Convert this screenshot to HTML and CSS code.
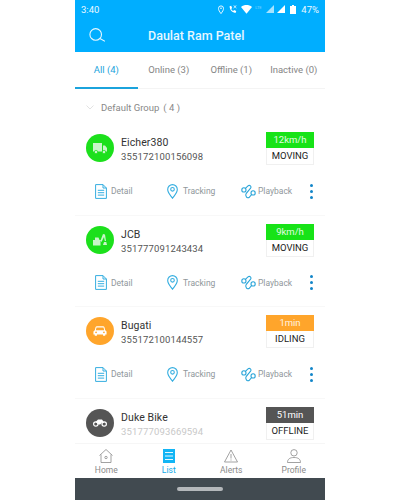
FILE: index.html
```html
<!DOCTYPE html>
<html lang="en">
<head>
<meta charset="utf-8">
<title>Vehicle list</title>
<link rel="stylesheet" href="styles.css">
</head>
<body>
<svg class="defs" width="0" height="0" aria-hidden="true">
  <defs>
    <symbol id="i-detail" viewBox="0 0 12 15">
      <path d="M.6.6h7.400l3.400 3.400V14.400H.6zM8 .6V4h3.400M2.800 6.300h6.400M2.800 8.700h6.400M2.800 11.100h6.400" fill="none" stroke="#35aee0" stroke-width="1"/>
    </symbol>
    <symbol id="i-track" viewBox="0 0 11 15">
      <path d="M5.500 14.300C3 10.800.7 8.500.7 5.400a4.800 4.800 0 0 1 9.600 0c0 3.100-2.300 5.400-4.800 8.900z" fill="none" stroke="#35aee0" stroke-width="1.100"/>
      <circle cx="5.500" cy="5.300" r="1.800" fill="none" stroke="#35aee0" stroke-width="1.100"/>
    </symbol>
    <symbol id="i-play" viewBox="0 0 15 15">
      <circle cx="2.900" cy="5.900" r="2.100" fill="none" stroke="#2aa5d9" stroke-width="1.100"/>
      <circle cx="12.100" cy="8.900" r="2.100" fill="none" stroke="#2aa5d9" stroke-width="1.100"/>
      <path d="M4.400 4.400 7 1.900C8.600.5 11 2.400 9.600 4.200L5.300 9.300C3.600 11.800 6.200 15 8.400 13.200L10.700 10.500" fill="none" stroke="#2aa5d9" stroke-width="1.100"/>
    </symbol>
  </defs>
</svg>
<div class="phone">
  <div class="status">
    <span>3:40</span>
    <div class="status-right">
      <svg class="st-pin" width="6" height="9" viewBox="0 0 6 9"><path d="M3 8.600C1.500 6.500.5 5.200.5 3.400a2.500 2.500 0 0 1 5 0C5.500 5.200 4.500 6.500 3 8.600z" fill="none" stroke="#fff" stroke-width=".9"/><circle cx="3" cy="3.300" r=".8" fill="#fff"/></svg>
      <svg class="st-call" width="8" height="9" viewBox="0 0 8 9"><path d="M.6 1.200 2.200.8l.9 2.200-.9.9c.4.900 1.100 1.700 2 2.100l.9-.9 2.100.9-.4 1.800C3.400 7.800.6 4.800.6 1.200z" fill="#fff"/><path d="M4.600.4 7.400 3M7.400.4 4.600 3" stroke="#fff" stroke-width=".8"/></svg>
      <svg class="st-wifi" width="11" height="9" viewBox="0 0 11 9"><path d="M0 2C3.200-.6 7.800-.6 11 2L5.500 8.800z" fill="#fff"/></svg>
      <span class="lte">LTE</span>
      <svg class="st-sig1" width="8" height="8" viewBox="0 0 8 8"><path d="M8 0V8H0z" fill="#fff" opacity=".65"/></svg>
      <svg class="st-sig2" width="8" height="8" viewBox="0 0 8 8"><path d="M8 0V8H0z" fill="#fff"/></svg>
      <svg class="st-batt" width="6" height="9" viewBox="0 0 6 9"><path d="M2 0h2v1h2v8H0V1h2z" fill="#fff"/></svg>
      <span class="st-pct">47%</span>
    </div>
  </div>
  <header class="header">
    <svg class="search" width="16" height="14" viewBox="0 0 16 14"><circle cx="6.700" cy="6.400" r="5.800" fill="none" stroke="#e6f7ff" stroke-width="1.100"/><path d="M10.900 10.500 16 13.300" stroke="#e6f7ff" stroke-width="1.100"/></svg>
    <h1 class="title">Daulat Ram Patel</h1>
  </header>
  <nav class="tabs">
    <a class="tab tab-active">All (4)</a>
    <a class="tab">Online (3)</a>
    <a class="tab">Offline (1)</a>
    <a class="tab">Inactive (0)</a>
  </nav>
  <div class="group">
    <svg width="8" height="5" viewBox="0 0 8 5"><path d="M.5.500 4 4 7.500.5" fill="none" stroke="#e2e2e2"/></svg>
    <span>Default Group</span><span class="group-count">( 4 )</span>
  </div>
  <main class="list">
    <article class="card">
      <div class="card-top">
        <div class="avatar green">
          <svg width="14" height="11" viewBox="0 0 14 11"><path d="M0 0h9v8.500H0zM10 2.500h2l2 2.500v3.500h-4z" fill="#c9f5c9"/><circle cx="3" cy="9" r="1.700" fill="#c9f5c9" stroke="#1ce01c" stroke-width=".7"/><circle cx="11" cy="9" r="1.700" fill="#c9f5c9" stroke="#1ce01c" stroke-width=".7"/></svg>
        </div>
        <div class="info">
          <div class="name">Eicher380</div>
          <div class="imei">355172100156098</div>
        </div>
        <div class="badge">
          <div class="badge-top bg-green">12km/h</div>
          <div class="badge-bottom">MOVING</div>
        </div>
      </div>
      <div class="actions">
        <div class="action a-detail"><svg class="ai-d"><use href="#i-detail"/></svg>Detail</div>
        <div class="action a-track"><svg class="ai-t"><use href="#i-track"/></svg>Tracking</div>
        <div class="action a-play"><svg class="ai-p"><use href="#i-play"/></svg>Playback</div>
        <div class="more"><i></i><i></i><i></i></div>
      </div>
    </article>
    <article class="card">
      <div class="card-top">
        <div class="avatar green">
          <svg width="14" height="13" viewBox="0 0 14 13"><path d="M0 7h7.500v5.500H0zM2 4.500h3.500l1 2.500H2zM7.500 7.500 10 1l2 .5 1 6.500h-1.200L11 4 8.500 9z" fill="#c9f5c9"/><path d="M11 9h2.300l.7 3h-4z" fill="#c9f5c9"/></svg>
        </div>
        <div class="info">
          <div class="name">JCB</div>
          <div class="imei">351777091243434</div>
        </div>
        <div class="badge">
          <div class="badge-top bg-green">9km/h</div>
          <div class="badge-bottom">MOVING</div>
        </div>
      </div>
      <div class="actions">
        <div class="action a-detail"><svg class="ai-d"><use href="#i-detail"/></svg>Detail</div>
        <div class="action a-track"><svg class="ai-t"><use href="#i-track"/></svg>Tracking</div>
        <div class="action a-play"><svg class="ai-p"><use href="#i-play"/></svg>Playback</div>
        <div class="more"><i></i><i></i><i></i></div>
      </div>
    </article>
    <article class="card">
      <div class="card-top">
        <div class="avatar orange">
          <svg width="14" height="12" viewBox="0 0 16 12"><path d="M3 1.500Q3.300.5 4.500.5h7q1.200 0 1.500 1L14 5l1.500 1.500V10H14v1.500h-2.500V10h-7v1.500H2V10H.5V6.500L2 5z" fill="#fff"/><path d="M4 2h8l.8 3H3.200z" fill="#ffa52b"/><circle cx="3.500" cy="7.500" r="1" fill="#ffa52b"/><circle cx="12.500" cy="7.500" r="1" fill="#ffa52b"/></svg>
        </div>
        <div class="info">
          <div class="name">Bugati</div>
          <div class="imei">355172100144557</div>
        </div>
        <div class="badge">
          <div class="badge-top bg-orange">1min</div>
          <div class="badge-bottom">IDLING</div>
        </div>
      </div>
      <div class="actions">
        <div class="action a-detail"><svg class="ai-d"><use href="#i-detail"/></svg>Detail</div>
        <div class="action a-track"><svg class="ai-t"><use href="#i-track"/></svg>Tracking</div>
        <div class="action a-play"><svg class="ai-p"><use href="#i-play"/></svg>Playback</div>
        <div class="more"><i></i><i></i><i></i></div>
      </div>
    </article>
    <article class="card">
      <div class="card-top">
        <div class="avatar grey">
          <svg width="14" height="9" viewBox="0 0 14 9"><circle cx="2.800" cy="6" r="2.200" fill="none" stroke="#fff" stroke-width="1.200"/><circle cx="11.200" cy="6" r="2.200" fill="none" stroke="#fff" stroke-width="1.200"/><path d="M2.500 4 5 1.500h4L11.500 5 9 4.500 7.200 6.500H5.500z" fill="#fff"/></svg>
        </div>
        <div class="info">
          <div class="name">Duke Bike</div>
          <div class="imei imei-faded">351777093669594</div>
        </div>
        <div class="badge">
          <div class="badge-top bg-grey">51min</div>
          <div class="badge-bottom">OFFLINE</div>
        </div>
      </div>
    </article>
  </main>
  <footer class="footer">
    <div class="nav-item">
      <svg width="14" height="14" viewBox="0 0 14 14"><path d="M.5 6.500 7 .5l6.500 6M2 5.500V13.500H12V5.500" fill="none" stroke="#8a8a8a" stroke-width=".8"/><circle cx="7" cy="8.500" r="1.200" fill="none" stroke="#8a8a8a" stroke-width=".8"/></svg>
      <span>Home</span>
    </div>
    <div class="nav-item nav-active">
      <svg width="12" height="14" viewBox="0 0 12 14"><rect width="12" height="14" fill="#12b5f5"/><path d="M2 3.500H10M2 7H10M2 10.500H10" stroke="#fff" stroke-width=".9"/></svg>
      <span>List</span>
    </div>
    <div class="nav-item">
      <svg width="14" height="14" viewBox="0 0 14 14"><path d="M7 1 13.500 13H.5z" fill="none" stroke="#8a8a8a" stroke-width=".8"/><path d="M7 5V9.500M7 10.500V11.500" stroke="#8a8a8a" stroke-width=".8"/></svg>
      <span>Alerts</span>
    </div>
    <div class="nav-item">
      <svg width="14" height="14" viewBox="0 0 14 14"><circle cx="7" cy="3.800" r="3.200" fill="none" stroke="#8a8a8a" stroke-width=".8"/><path d="M.5 13.500C.5 10 3 8.500 7 8.500S13.500 10 13.500 13.500z" fill="none" stroke="#8a8a8a" stroke-width=".8"/></svg>
      <span>Profile</span>
    </div>
  </footer>
  <div class="android-bar"><div class="pill"></div></div>
</div>
</body>
</html>
```

FILE: styles.css
```css
* { box-sizing: border-box; }
html, body { margin: 0; padding: 0; background: #fff; }
body { width: 400px; height: 500px; overflow: hidden; font-family: Roboto, "Liberation Sans", sans-serif; }
.defs { display: block; height: 0; }

.phone { width: 250px; height: 500px; margin: 0 auto; display: flex; flex-direction: column; background: #fff; }

.status { height: 18px; flex: none; background: #00aeff; color: #e9f8ff; font-size: 9.500px; display: flex; align-items: center; justify-content: space-between; padding: 0 6px 0 6px; }
.status-right { display: flex; align-items: center; }
.status-right svg { display: block; }
.lte { font-size: 4px; opacity: .5; width: 10px; margin-left: 3px; margin-top: -3px; }
.st-call { margin-left: 5px; }
.st-wifi { margin-left: 4px; }
.st-sig1 { margin-left: 1px; }
.st-sig2 { margin-left: 3px; }
.st-batt { margin-left: 5px; }
.st-pct { margin-left: 5px; }

.header { height: 34px; flex: none; background: #00aeff; display: flex; align-items: center; padding-left: 14px; }
.search { flex: none; }
.title { margin: 0 0 0 43px; font-size: 12.500px; font-weight: 500; color: #e6f7ff; }

.tabs { height: 37px; flex: none; display: flex; border-bottom: 1px solid #f4f4f4; }
.tab { flex: 1; display: flex; align-items: center; justify-content: center; font-size: 9.500px; color: #858585; margin-bottom: -1px; white-space: nowrap; border-bottom: 2px solid transparent; }
.tab-active { color: #1ba3dc; border-bottom-color: #1ba3dc; }

.group { height: 35px; flex: none; display: flex; align-items: center; font-size: 9.500px; color: #888; padding: 1px 0 0 11px; }
.group span:first-of-type { margin-left: 7px; }
.group-count { margin-left: 4px; }

.list { flex: 1; min-height: 0; overflow: hidden; }
.card { height: 91.500px; padding: 8px 11px 0; border-bottom: 1px solid #f8f8f8; }
.card-top { display: flex; align-items: flex-start; }
.avatar { width: 28px; height: 28px; margin-top: 2px; border-radius: 50%; flex: none; display: flex; align-items: center; justify-content: center; }
.green { background: #1ce01c; }
.orange { background: #ffa52b; }
.grey { background: #555; }
.info { flex: 1; padding: 4px 0 0 7px; }
.name { font-size: 10.500px; line-height: 13px; color: #333; letter-spacing: .1px; }
.imei { font-size: 9.500px; line-height: 15px; color: #555; letter-spacing: .15px; }
.imei-faded { color: #c8c8c8; }
.badge { width: 48px; flex: none; border: 1px solid #f0f0f0; border-top: 0; text-align: center; }
.badge-top { height: 16px; margin: 0 -1px; font-size: 9.500px; line-height: 16px; color: #e4fbe4; }
.bg-green { background: #17e317; }
.bg-orange { background: #ffa52b; color: #fff3e0; }
.bg-grey { background: #555; color: #fff; }
.badge-bottom { height: 16px; font-size: 9.500px; line-height: 16px; color: #222; }

.actions { display: flex; align-items: center; height: 24px; margin: 14px 0 0 9px; }
.action { display: flex; align-items: center; font-size: 8.500px; color: #8f979b; }
.action svg { display: block; }
.ai-d { width: 12px; height: 15px; margin-right: 4px; }
.ai-t { width: 11px; height: 15px; margin-right: 5px; }
.ai-p { width: 15px; height: 15px; margin-right: 2px; }
.a-detail { width: 72px; }
.a-track { width: 74px; }
.a-play { width: 64px; }
.more { display: flex; flex-direction: column; gap: 3px; margin-left: 5px; }
.more i { display: block; width: 3px; height: 3px; border-radius: 50%; background: #1285c9; }

.footer { height: 35px; flex: none; display: flex; background: #fff; border-top: 1px solid #f6f6f6; padding-top: 5px; }
.nav-item { flex: 1; display: flex; flex-direction: column; align-items: center; font-size: 8.500px; line-height: 10px; color: #8a8a8a; gap: 2px; }
.nav-active { color: #12a9e8; }
.nav-item svg { display: block; }

.android-bar { height: 22px; flex: none; background: #414a50; display: flex; align-items: center; justify-content: center; }
.pill { width: 46px; height: 4px; border-radius: 2px; background: #b4b8bb; }
```
